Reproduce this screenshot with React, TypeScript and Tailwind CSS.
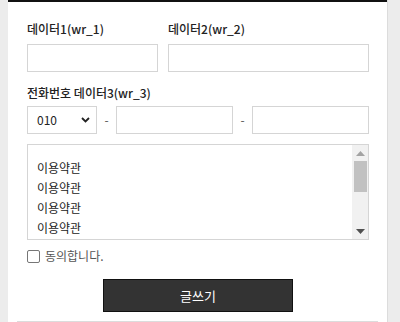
import React from "react";

const terms = ["이용약관", "이용약관", "이용약관", "이용약관"];

const font = {
  fontFamily: '"Noto Sans CJK KR", "Noto Sans", sans-serif',
};

export default function App() {
  return (
    <div className="flex h-[322px] w-[400px] overflow-hidden bg-[#ececec]" style={font}>
      <div className="w-2 shrink-0" />
      <div className="flex w-[380px] shrink-0 flex-col border-r border-[#dcdcdc] bg-white">
        <div className="h-[2px] shrink-0 bg-[#111]" />
        <form className="flex shrink-0 flex-col pl-[19px] pr-[18px] pt-[18px]">
          <div className="grid grid-cols-[131px_1fr] gap-x-[10px]">
            <label className="text-[12px] font-medium leading-[18px] text-[#222]">데이터1(wr_1)</label>
            <label className="text-[12px] font-medium leading-[18px] text-[#222]">데이터2(wr_2)</label>
            <input className="mt-[6px] h-[28px] border border-[#d5d5d5] bg-white px-2 outline-none" />
            <input className="mt-[6px] h-[28px] border border-[#d5d5d5] bg-white px-2 outline-none" />
          </div>

          <label className="mt-[12px] text-[12px] font-medium leading-[18px] text-[#222]">
            전화번호 데이터3(wr_3)
          </label>
          <div className="mt-[4px] flex h-[28px] items-stretch">
            <div className="relative w-[70px] shrink-0">
              <select className="h-full w-full appearance-none border border-[#d5d5d5] bg-white pl-[9px] text-[12px] text-[#222] outline-none">
                <option>010</option>
              </select>
              <svg
                className="pointer-events-none absolute right-[7px] top-1/2 -translate-y-1/2"
                width="9"
                height="6"
                viewBox="0 0 9 6"
              >
                <path d="M1 1l3.5 3.5L8 1" fill="none" stroke="#222" strokeWidth="1.8" />
              </svg>
            </div>
            <span className="flex w-[19px] items-center justify-center text-[12px] text-[#555]">-</span>
            <input className="min-w-0 flex-1 border border-[#d5d5d5] bg-white px-2 outline-none" />
            <span className="flex w-[19px] items-center justify-center text-[12px] text-[#555]">-</span>
            <input className="min-w-0 flex-1 border border-[#d5d5d5] bg-white px-2 outline-none" />
          </div>

          <div className="mt-[10px] flex h-[96px] border border-[#d5d5d5]">
            <div className="flex-1 overflow-hidden pl-[9px] pt-[13px]">
              {terms.map((t, i) => (
                <div key={i} className="text-[12px] leading-[20px] text-[#222]">
                  {t}
                </div>
              ))}
            </div>
            <div className="flex w-[16px] flex-col items-center bg-[#f1f1f1]">
              <div className="flex h-[16px] items-center justify-center">
                <svg width="9" height="5" viewBox="0 0 9 5">
                  <path d="M0 5L4.5 0L9 5z" fill="#a3a3a3" />
                </svg>
              </div>
              <div className="h-[31px] w-[13px] bg-[#c1c1c1]" />
              <div className="flex-1" />
              <div className="flex h-[16px] items-center justify-center">
                <svg width="9" height="5" viewBox="0 0 9 5">
                  <path d="M0 0L4.5 5L9 0z" fill="#505050" />
                </svg>
              </div>
            </div>
          </div>

          <label className="mt-[7px] flex items-center gap-[5px]">
            <span className="h-[13px] w-[13px] rounded-[2px] border border-[#767676] bg-white" />
            <span className="text-[12px] leading-[18px] text-[#555]">동의합니다.</span>
          </label>

          <div className="mt-[14px] flex justify-center">
            <button
              type="button"
              className="h-[33px] w-[190px] border border-[#111] bg-[#333] text-[13px] text-white"
            >
              글쓰기
            </button>
          </div>
        </form>
        <div className="mx-[9px] mt-[9px] shrink-0 border-t border-[#dcdcdc]" />
      </div>
      <div className="flex-1" />
    </div>
  );
}
